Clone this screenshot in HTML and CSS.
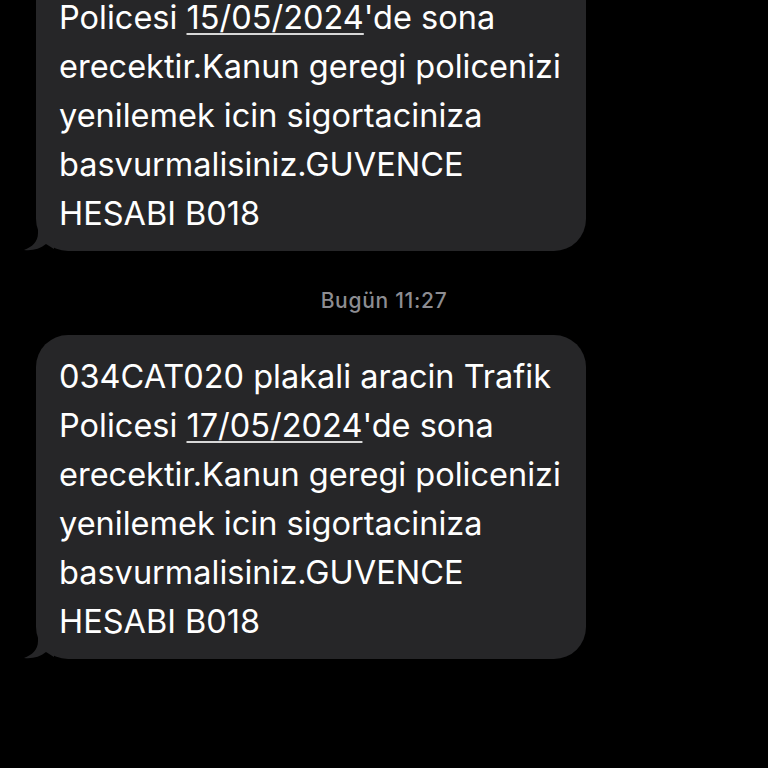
FILE: index.html
```html
<!DOCTYPE html>
<html lang="tr">
	<head>
		<meta name="viewport" content="initial-scale=1, width=device-width">
		<title>Mesajlar</title>
		<link rel="stylesheet" href="styles.css">
	</head>
	<body>
		<div class="thread">
			<div class="msg">
				<div class="bubble">
					034CAT020 plakali aracin Trafik<br>
					Policesi <u>15/05/2024</u>'de sona<br>
					erecektir.Kanun geregi policenizi<br>
					yenilemek icin sigortaciniza<br>
					basvurmalisiniz.GUVENCE<br>
					HESABI B018
				</div>
				<svg class="tail" width="30" height="24" viewBox="0 0 30 24">
					<path d="M14 0 L14 6 C14 15 8 20 0 23 C8 24 16 22 22 17 L30 22 L30 0 Z" fill="#262628"/>
				</svg>
			</div>

			<div class="stamp">Bugün 11:27</div>

			<div class="msg">
				<div class="bubble">
					034CAT020 plakali aracin Trafik<br>
					Policesi <u>17/05/2024</u>'de sona<br>
					erecektir.Kanun geregi policenizi<br>
					yenilemek icin sigortaciniza<br>
					basvurmalisiniz.GUVENCE<br>
					HESABI B018
				</div>
				<svg class="tail" width="30" height="24" viewBox="0 0 30 24">
					<path d="M14 0 L14 6 C14 15 8 20 0 23 C8 24 16 22 22 17 L30 22 L30 0 Z" fill="#262628"/>
				</svg>
			</div>
		</div>
	</body>
</html>
```

FILE: styles.css
```css
* {
	box-sizing: border-box;
}

html, body {
	margin: 0;
	padding: 0;
	background: #000;
	height: 100vh;
	overflow: hidden;
	font-family: Inter, "Liberation Sans", sans-serif;
	-webkit-font-smoothing: antialiased;
}

/* scrolled so the first bubble is cut off at the top */
.thread {
	display: flex;
	flex-direction: column;
	margin-top: -73px;
	padding-left: 36px;
}

.msg {
	position: relative;
	width: 550px;
}

.bubble {
	background: #262628;
	color: #fff;
	font-size: 32.5px;
	line-height: 49px;
	padding: 17px 10px 13px 23px;
	border-radius: 32px;
	white-space: nowrap;
}

.bubble u {
	text-decoration-thickness: 1.5px;
	text-underline-offset: 4px;
	text-decoration-color: #d8d8d8;
}

.tail {
	position: absolute;
	left: -12px;
	bottom: 0;
}

.stamp {
	color: #8d8d92;
	font-size: 21px;
	font-weight: 500;
	letter-spacing: 0.7px;
	text-align: center;
	margin-left: -36px;
	line-height: 24px;
	padding: 38px 0 22px;
}
```
